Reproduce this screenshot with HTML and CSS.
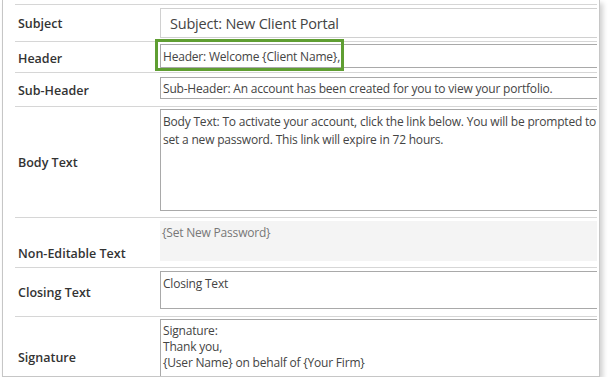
FILE: index.html
```html
<!DOCTYPE html>
<html lang="en">
<head>
<meta charset="UTF-8">
<meta name="viewport" content="width=device-width, initial-scale=1.0">
<title>Client Portal Email</title>
<link rel="stylesheet" href="styles.css">
</head>
<body>

<div id="panel">
    <div class="row row-subject">
        <div class="label">Subject</div>
        <div class="cell">
            <div class="field field-subject">Subject: New Client Portal</div>
        </div>
    </div>
    <div class="row row-header">
        <div class="label label-header">Header</div>
        <div class="cell">
            <div class="field field-header">Header: Welcome {Client Name},</div>
        </div>
        <div class="highlight"></div>
    </div>
    <div class="row row-subheader">
        <div class="label">Sub-Header</div>
        <div class="cell">
            <div class="field field-subheader">Sub-Header: An account has been created for you to view your portfolio.</div>
        </div>
    </div>
    <div class="row row-body">
        <div class="label">Body Text</div>
        <div class="cell">
            <div class="field field-body">Body Text: To activate your account, click the link below. You will be prompted to<br>set a new password. This link will expire in 72 hours.</div>
        </div>
    </div>
    <div class="row row-fixed">
        <div class="label label-low label-fixed">Non-Editable Text</div>
        <div class="cell">
            <div class="fixed">{Set New Password}</div>
        </div>
    </div>
    <div class="row row-closing">
        <div class="label">Closing Text</div>
        <div class="cell">
            <div class="field field-closing">Closing Text</div>
        </div>
    </div>
    <div class="row row-signature">
        <div class="label label-low label-signature">Signature</div>
        <div class="cell">
            <div class="field field-signature">Signature:<br>Thank you,<br>{User Name} on behalf of {Your Firm}</div>
        </div>
    </div>
</div>

</body>
</html>
```

FILE: styles.css
```css
body {
    font-family: "Open Sans", Arial, sans-serif;
    margin: 0;
    padding: 0;
    background-color: white;
    color: #333;
}
#panel {
    margin-left: 2px;
    width: 582px;
    height: 372px;
    padding: 4px 2px 0 12px;
    border-left: 1px solid #c6c6c6;
    border-right: 1px solid #c6c6c6;
    border-bottom: 1px solid #c6c6c6;
    box-shadow: 3px 3px 5px rgba(0, 0, 0, 0.18);
    overflow: hidden;
}
.row {
    position: relative;
    display: flex;
    border-top: 1px solid #d6d6d6;
}
.label {
    display: flex;
    align-items: center;
    box-sizing: border-box;
    width: 145px;
    padding: 2px 0 0 3px;
    font-size: 12.5px;
    font-weight: 600;
    line-height: 16px;
    color: #333;
}
.label-header {
    padding-top: 3px;
}
.label-low {
    align-items: flex-end;
    padding-top: 0;
}
.label-fixed {
    padding-bottom: 5px;
}
.label-signature {
    padding-bottom: 14px;
}
.cell {
    flex: 1;
    overflow: hidden;
}
.field {
    box-sizing: border-box;
    width: 460px;
    border: 1px solid #a9a9a9;
    padding: 3px 2px 0;
    font-size: 12px;
    line-height: 18px;
    color: #444;
    letter-spacing: -0.2px;
    white-space: nowrap;
}
.row-subject .cell {
    padding: 3px 0;
}
.field-subject {
    height: 30px;
    border-color: #d0d0d0;
    padding: 6px 9px 0;
    font-size: 14.5px;
    line-height: 18px;
}
.row-header .cell {
    padding: 2px 0 4px;
}
.field-header {
    height: 24px;
}
.row-subheader .cell {
    padding: 4px 0 7px;
}
.field-subheader {
    height: 22px;
    padding-top: 2px;
}
.row-body .cell {
    padding: 2px 0 6px;
}
.field-body {
    height: 102px;
}
.row-fixed .cell {
    padding: 3px 0 6px;
}
.fixed {
    height: 40px;
    box-sizing: border-box;
    padding: 3px 2px 0;
    background-color: #f4f4f4;
    font-size: 12px;
    line-height: 18px;
    color: #777;
    letter-spacing: -0.2px;
}
.row-closing .cell {
    padding: 3px 0 7px;
}
.field-closing {
    height: 38px;
}
.row-signature .cell {
    padding: 2px 0 3px;
}
.field-signature {
    height: 58px;
    line-height: 16px;
    border-bottom: none;
}
.highlight {
    position: absolute;
    left: 140px;
    top: -3px;
    width: 183px;
    height: 26px;
    border: 3px solid #5f9e32;
}
```
